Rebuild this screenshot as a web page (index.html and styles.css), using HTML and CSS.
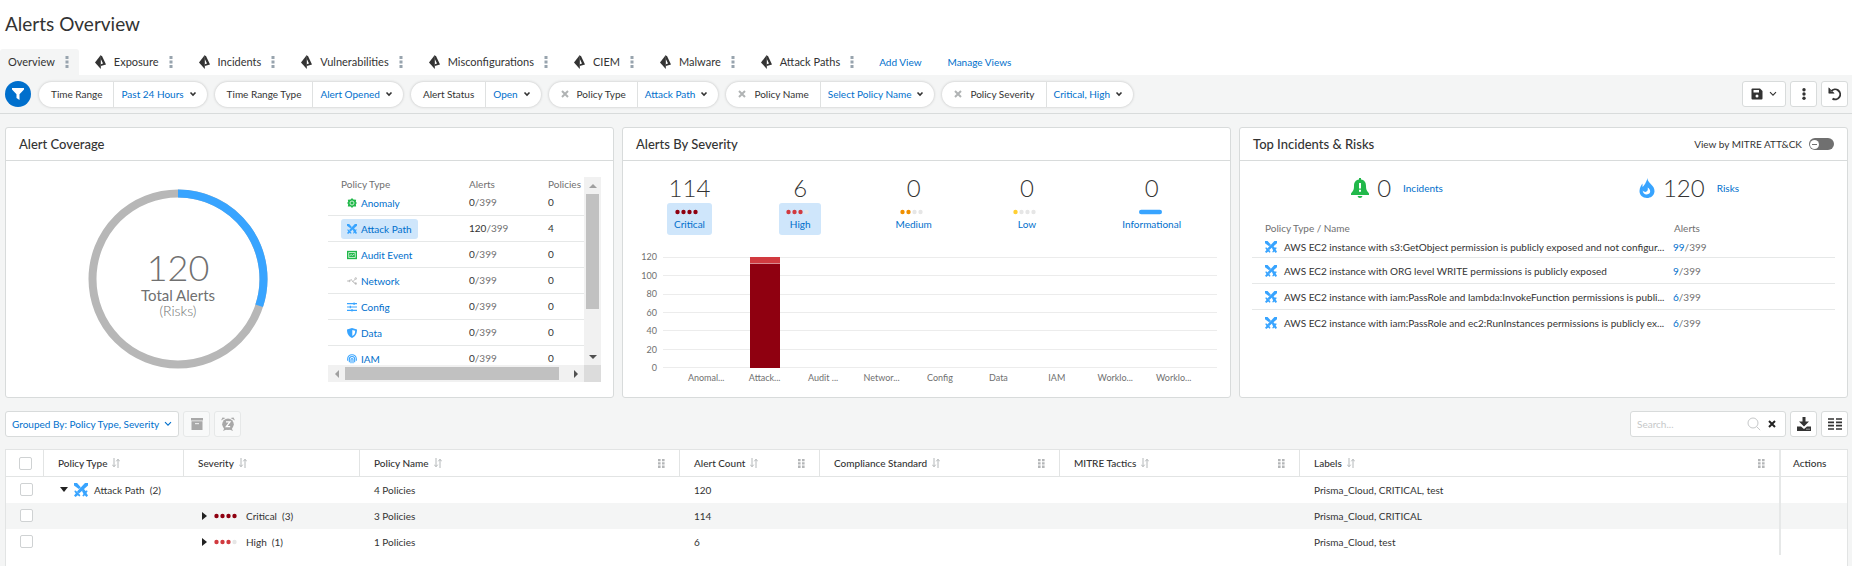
FILE: index.html
```html
<!DOCTYPE html>
<html lang="en">
<head>
<meta charset="utf-8">
<title>Alerts Overview</title>
<link rel="stylesheet" href="styles.css">
</head>
<body>
<svg class="defs" width="0" height="0" aria-hidden="true">
  <symbol id="prism" viewBox="0 0 11 14"><path d="M5.800 0 0 7.500 5.800 14z" fill="#333"/><path d="M5.500.500 7 1l4 8.500-5.200 1.500V9.300l2.200-.8L5.800 4z" fill="#333"/></symbol>
  <symbol id="kebab" viewBox="0 0 4 12"><path d="M.5 0h3v3h-3zM.5 4.500h3v3h-3zM.5 9h3v3h-3z" fill="currentColor"/></symbol>
  <symbol id="dots3" viewBox="0 0 4 12"><g fill="currentColor"><circle cx="2" cy="1.700" r="1.700"/><circle cx="2" cy="6" r="1.700"/><circle cx="2" cy="10.300" r="1.700"/></g></symbol>
  <symbol id="chev" viewBox="0 0 8 6"><path d="M1.500 1.500 4 4l2.500-2.500" fill="none" stroke="currentColor" stroke-width="1.600"/></symbol>
  <symbol id="thinchev" viewBox="0 0 8 6"><path d="M1 1.200 4 4.200l3-3" fill="none" stroke="currentColor" stroke-width="1.100"/></symbol>
  <symbol id="cross" viewBox="0 0 8 8"><path d="M1 1l6 6M7 1 1 7" stroke="currentColor" stroke-width="2"/></symbol>
  <symbol id="swords" viewBox="0 0 14 14"><path d="M0 0h3l3.800 4.200L4.800 6 0 2.500zM14 0h-3L3 8.500 5 10.500l9-8zM8 8l2-2 1.500 2 1.500-.8.6 1.200-1.200 1.500L14 12.500 12.500 14l-1.700-1.800L9.500 13.400 8.300 12.800 9.500 11zM1 7.200l1.200.8L6 11.800l.3 1-1 .8-1.500-1.400L1.500 14 0 12.500l1.800-1.900L.4 8.400z" fill="#38a4ff"/></symbol>
  <symbol id="gear" viewBox="0 0 12 12"><path d="M6 0 7.600 1.800 11 2 10.600 4.600 11.800 6l-1.200 1.600.4 2.500-3.400.2L6 12 4.400 10.300l-3.400-.2.400-2.500L.2 6l1.200-1.400L1 2l3.400-.2z" fill="#21b84a"/><circle cx="6" cy="6" r="2.400" fill="none" stroke="#c9f0d3" stroke-width="1.200"/></symbol>
  <symbol id="audit" viewBox="0 0 12 12"><path d="M0 1h12v10H0z" fill="#21b84a"/><path d="M2 3h8v6H2z" fill="none" stroke="#d5f3dc"/><path d="M3 7l2-1.500 1.500 1L9 4.800" fill="none" stroke="#e4f8e9"/></symbol>
  <symbol id="network" viewBox="0 0 12 10"><g fill="none" stroke="#b5b5b5"><path d="M0 5h3l2-2 2 3 3-3.500M7 6l4 2.500"/><circle cx="10.500" cy="2" r="1"/><circle cx="10.500" cy="8" r="1"/><circle cx="3" cy="5" r=".8"/></g></symbol>
  <symbol id="sliders" viewBox="0 0 12 12"><path d="M0 2h12M0 6h12M0 10h12M8.500.5v3M4 4.500v3M6 8.500v3" stroke="#38a4ff" stroke-width="1.400"/></symbol>
  <symbol id="shield" viewBox="0 0 12 12"><path d="M6 0 12 1.800c0 5-1.500 8-6 10.200C1.500 9.800 0 6.800 0 1.800z" fill="#38a4ff"/><path d="M6.400 2.300 9.800 3.200C9.800 6.300 9 8 6.400 9.700z" fill="#fff"/></symbol>
  <symbol id="finger" viewBox="0 0 12 12"><g fill="none" stroke="#38a4ff" stroke-width="1.300"><path d="M.8 8V6a5.200 5.200 0 0 1 10.400 0v2M2.800 10V6.200a3.200 3.200 0 0 1 6.400 0V10M4.800 11V6.500a1.200 1.200 0 0 1 2.400 0V11"/></g></symbol>
  <symbol id="sort" viewBox="0 0 8 10"><path d="M2 0v8.500M.3 6.700 2 8.800l1.700-2.100M6 10V1.500M4.300 3.300 6 1.200l1.700 2.100" fill="none" stroke="#b4b8ba"/></symbol>
  <symbol id="grip" viewBox="0 0 7 9"><path d="M0 0h2.600v2.300H0zM4 0h2.600v2.300H4zM0 3.300h2.600v2.300H0zM4 3.300h2.600v2.300H4zM0 6.600h2.600v2.300H0zM4 6.600h2.600v2.300H4z" fill="#b4b6b8"/></symbol>
  <symbol id="sev4" viewBox="0 0 28 6"><g fill="#8f0010"><circle cx="2.500" cy="3" r="2.200"/><circle cx="8.500" cy="3" r="2.200"/><circle cx="14.500" cy="3" r="2.200"/><circle cx="20.500" cy="3" r="2.200"/></g></symbol>
  <symbol id="sev3" viewBox="0 0 28 6"><g fill="#d13a3f"><circle cx="2.500" cy="3" r="2.200"/><circle cx="8.500" cy="3" r="2.200"/><circle cx="14.500" cy="3" r="2.200"/></g><circle cx="20.500" cy="3" r="2.200" fill="#e6e6e6"/></symbol>
  <symbol id="sev2" viewBox="0 0 28 6"><g fill="#f09000"><circle cx="2.500" cy="3" r="2.200"/><circle cx="8.500" cy="3" r="2.200"/></g><g fill="#e6e6e6"><circle cx="14.500" cy="3" r="2.200"/><circle cx="20.500" cy="3" r="2.200"/></g></symbol>
  <symbol id="sev1" viewBox="0 0 28 6"><circle cx="2.500" cy="3" r="2.200" fill="#ffcf33"/><g fill="#e6e6e6"><circle cx="8.500" cy="3" r="2.200"/><circle cx="14.500" cy="3" r="2.200"/><circle cx="20.500" cy="3" r="2.200"/></g></symbol>
  <symbol id="sev0" viewBox="0 0 28 6"><rect x="1" y=".8" width="23" height="4.400" rx="2.200" fill="#38a4ff"/></symbol>
</svg>

<header class="title-bar"><h1>Alerts Overview</h1></header>

<nav class="tabs" aria-label="Views">
  <div class="tab active"><a href="#">Overview</a><button class="plain" aria-label="Overview menu"><svg class="kebab"><use href="#kebab"/></svg></button></div>
  <div class="tab"><svg class="prism"><use href="#prism"/></svg><a href="#">Exposure</a><button class="plain" aria-label="Exposure menu"><svg class="kebab"><use href="#kebab"/></svg></button></div>
  <div class="tab"><svg class="prism"><use href="#prism"/></svg><a href="#">Incidents</a><button class="plain" aria-label="Incidents menu"><svg class="kebab"><use href="#kebab"/></svg></button></div>
  <div class="tab"><svg class="prism"><use href="#prism"/></svg><a href="#">Vulnerabilities</a><button class="plain" aria-label="Vulnerabilities menu"><svg class="kebab"><use href="#kebab"/></svg></button></div>
  <div class="tab"><svg class="prism"><use href="#prism"/></svg><a href="#">Misconfigurations</a><button class="plain" aria-label="Misconfigurations menu"><svg class="kebab"><use href="#kebab"/></svg></button></div>
  <div class="tab"><svg class="prism"><use href="#prism"/></svg><a href="#">CIEM</a><button class="plain" aria-label="CIEM menu"><svg class="kebab"><use href="#kebab"/></svg></button></div>
  <div class="tab"><svg class="prism"><use href="#prism"/></svg><a href="#">Malware</a><button class="plain" aria-label="Malware menu"><svg class="kebab"><use href="#kebab"/></svg></button></div>
  <div class="tab"><svg class="prism"><use href="#prism"/></svg><a href="#">Attack Paths</a><button class="plain" aria-label="Attack Paths menu"><svg class="kebab"><use href="#kebab"/></svg></button></div>
  <div class="view-links"><a href="#">Add View</a><a href="#">Manage Views</a></div>
</nav>

<section class="filters" aria-label="Filters">
  <button class="filter-toggle" aria-label="Filters"><svg width="14" height="14" viewBox="0 0 14 14"><path d="M1 1h12v1.500L8.500 7.300V13l-3-2V7.300L1 2.500z" fill="#fff"/></svg></button>
  <div class="pill"><span class="pill-name">Time Range</span><button class="pill-value">Past 24 Hours<svg class="chev"><use href="#chev"/></svg></button></div>
  <div class="pill"><span class="pill-name">Time Range Type</span><button class="pill-value">Alert Opened<svg class="chev"><use href="#chev"/></svg></button></div>
  <div class="pill"><span class="pill-name">Alert Status</span><button class="pill-value">Open<svg class="chev"><use href="#chev"/></svg></button></div>
  <div class="pill"><span class="pill-name"><button class="plain remove" aria-label="Remove"><svg class="cross"><use href="#cross"/></svg></button>Policy Type</span><button class="pill-value">Attack Path<svg class="chev"><use href="#chev"/></svg></button></div>
  <div class="pill"><span class="pill-name"><button class="plain remove" aria-label="Remove"><svg class="cross"><use href="#cross"/></svg></button>Policy Name</span><button class="pill-value">Select Policy Name<svg class="chev"><use href="#chev"/></svg></button></div>
  <div class="pill"><span class="pill-name"><button class="plain remove" aria-label="Remove"><svg class="cross"><use href="#cross"/></svg></button>Policy Severity</span><button class="pill-value">Critical, High<svg class="chev"><use href="#chev"/></svg></button></div>
  <div class="actions">
    <button class="btn wide" aria-label="Save"><svg width="12" height="12" viewBox="0 0 12 12"><path d="M1.500.5H9L11.500 3v7.500q0 1-1 1h-9q-1 0-1-1v-9q0-1 1-1z" fill="#333"/><path d="M2.500 2h5.500v2.500H2.500z" fill="#fff"/><circle cx="6" cy="8" r="1.500" fill="#fff"/></svg><svg class="chev"><use href="#thinchev"/></svg></button>
    <button class="btn" aria-label="More"><svg class="kebab"><use href="#dots3"/></svg></button>
    <button class="btn" aria-label="Reset"><svg width="14" height="14" viewBox="0 0 14 14"><path d="M3.300 4.200A5 5 0 1 1 4.500 11.600" fill="none" stroke="#333" stroke-width="1.900"/><path d="M.8.800v5.400h5.400L4.600 4.800H2.500V2.500z" fill="#333" stroke="#333" stroke-width=".6"/></svg></button>
  </div>
</section>

<main>
  <div class="cards">
    <section class="card">
      <header><h2>Alert Coverage</h2></header>
      <div class="coverage">
        <div class="donut">
          <svg viewBox="0 0 180 180"><circle cx="90" cy="90" r="85.500" fill="none" stroke="#b7b7b7" stroke-width="8"/><path d="M90 4.500A85.500 85.500 0 0 1 171.200 116.800" fill="none" stroke="#38a4ff" stroke-width="8"/></svg>
          <div class="donut-text"><span class="total">120</span><span class="total-label">Total Alerts</span><span class="total-sub">(Risks)</span></div>
        </div>
        <div class="scroller">
          <div class="scroll-view">
            <table class="types">
              <colgroup><col class="c-type"><col class="c-alerts"><col></colgroup>
              <thead><tr><th>Policy Type</th><th>Alerts</th><th>Policies</th></tr></thead>
              <tbody>
                <tr><td><a href="#" class="type"><svg class="ti"><use href="#gear"/></svg>Anomaly</a></td><td><b>0</b>/399</td><td><b>0</b></td></tr>
                <tr><td><a href="#" class="type on"><svg class="ti"><use href="#swords"/></svg>Attack Path</a></td><td><b>120</b>/399</td><td><b>4</b></td></tr>
                <tr><td><a href="#" class="type"><svg class="ti"><use href="#audit"/></svg>Audit Event</a></td><td><b>0</b>/399</td><td><b>0</b></td></tr>
                <tr><td><a href="#" class="type"><svg class="ti"><use href="#network"/></svg>Network</a></td><td><b>0</b>/399</td><td><b>0</b></td></tr>
                <tr><td><a href="#" class="type"><svg class="ti"><use href="#sliders"/></svg>Config</a></td><td><b>0</b>/399</td><td><b>0</b></td></tr>
                <tr><td><a href="#" class="type"><svg class="ti"><use href="#shield"/></svg>Data</a></td><td><b>0</b>/399</td><td><b>0</b></td></tr>
                <tr><td><a href="#" class="type"><svg class="ti"><use href="#finger"/></svg>IAM</a></td><td><b>0</b>/399</td><td><b>0</b></td></tr>
              </tbody>
            </table>
          </div>
          <div class="vbar" aria-hidden="true"><i class="arrow up off"></i><span class="thumb"></span><i class="arrow down"></i></div>
          <div class="hbar" aria-hidden="true"><i class="arrow left off"></i><span class="thumb"></span><i class="arrow right"></i></div>
          <div class="corner"></div>
        </div>
      </div>
    </section>

    <section class="card">
      <header><h2>Alerts By Severity</h2></header>
      <div class="severities">
        <a href="#" class="sev"><span class="num">114</span><span class="chip on"><svg class="sd"><use href="#sev4"/></svg>Critical</span></a>
        <a href="#" class="sev"><span class="num">6</span><span class="chip on"><svg class="sd"><use href="#sev3"/></svg>High</span></a>
        <a href="#" class="sev"><span class="num">0</span><span class="chip"><svg class="sd"><use href="#sev2"/></svg>Medium</span></a>
        <a href="#" class="sev"><span class="num">0</span><span class="chip"><svg class="sd"><use href="#sev1"/></svg>Low</span></a>
        <a href="#" class="sev"><span class="num">0</span><span class="chip"><svg class="sd"><use href="#sev0"/></svg>Informational</span></a>
      </div>
      <div class="chart">
        <div class="yaxis"><span>120</span><span>100</span><span>80</span><span>60</span><span>40</span><span>20</span><span>0</span></div>
        <div class="plot">
          <div class="lines"><i></i><i></i><i></i><i></i><i></i><i></i></div>
          <div class="bars"><span></span><span><i class="bar"><i class="high" style="height:5%"></i><i class="crit" style="height:95%"></i></i></span><span></span><span></span><span></span><span></span><span></span><span></span><span></span></div>
        </div>
        <div class="xaxis"><span>Anomal...</span><span>Attack...</span><span>Audit ...</span><span>Networ...</span><span>Config</span><span>Data</span><span>IAM</span><span>Worklo...</span><span>Worklo...</span></div>
      </div>
    </section>

    <section class="card">
      <header><h2>Top Incidents &amp; Risks</h2><label class="switch">View by MITRE ATT&amp;CK<input type="checkbox" role="switch"></label></header>
      <div class="summary">
        <a href="#" class="stat"><svg width="18" height="20" viewBox="0 0 18 20"><path d="M8 0h2v1.500C13.500 2 15 4.500 15 8c0 4 1 5 3 7.500V17H0v-1.500C2 13 3 12 3 8c0-3.500 1.500-6 5-6.500zM6.500 18h5q-.5 2-2.500 2t-2.500-2z" fill="#21b84a"/><path d="M8 5h2v5.500H8zM8 11.800h2v2H8z" fill="#fff"/></svg><span class="num">0</span><span>Incidents</span></a>
        <a href="#" class="stat"><svg width="16" height="20" viewBox="0 0 16 20"><path d="M8.500 0C8 5 16 7 15.500 13.500 15 18 11.500 20 8 20 3.500 20 .5 17 .5 13 .5 9.500 2.500 7 3.500 5.500V9C5 8 7.500 4 8.500 0z" fill="#38a4ff"/><path d="M8.700 9.500c3 1.500 4 6.500-1 7-2.500 0-4-1.800-4-4 2.500 3 6 1 5-3z" fill="#fff"/></svg><span class="num">120</span><span>Risks</span></a>
      </div>
      <table class="top">
        <colgroup><col><col class="c-count"></colgroup>
        <thead><tr><th>Policy Type / Name</th><th>Alerts</th></tr></thead>
        <tbody>
          <tr><td><div class="cell"><svg class="ti"><use href="#swords"/></svg><span>AWS EC2 instance with s3:GetObject permission is publicly exposed and not configur...</span></div></td><td><a href="#">99</a>/399</td></tr>
          <tr><td><div class="cell"><svg class="ti"><use href="#swords"/></svg><span>AWS EC2 instance with ORG level WRITE permissions is publicly exposed</span></div></td><td><a href="#">9</a>/399</td></tr>
          <tr><td><div class="cell"><svg class="ti"><use href="#swords"/></svg><span>AWS EC2 instance with iam:PassRole and lambda:InvokeFunction permissions is publi...</span></div></td><td><a href="#">6</a>/399</td></tr>
          <tr><td><div class="cell"><svg class="ti"><use href="#swords"/></svg><span>AWS EC2 instance with iam:PassRole and ec2:RunInstances permissions is publicly ex...</span></div></td><td><a href="#">6</a>/399</td></tr>
        </tbody>
      </table>
    </section>
  </div>

  <div class="toolbar">
    <button class="btn group">Grouped By: Policy Type, Severity<svg class="chev"><use href="#thinchev"/></svg></button>
    <button class="btn disabled" disabled aria-label="Dismiss"><svg width="12" height="12" viewBox="0 0 12 12"><path d="M0 0h12v2.500H0zM.5 3.300h11V12H.5z" fill="#a8a8a8"/><path d="M4 5h4v1.200H4z" fill="#e8e8e8"/></svg></button>
    <button class="btn disabled" disabled aria-label="Snooze"><svg width="14" height="14" viewBox="0 0 14 14"><path d="M0 3.500 1.500.5 4.500 1zM14 3.500 12.500.5 9.500 1z" fill="#a8a8a8"/><circle cx="7" cy="7.300" r="5.800" fill="#a8a8a8"/><path d="M2 14l1.500-3 2 1.500zM12 14l-1.500-3-2 1.500z" fill="#a8a8a8"/><path d="M5 4.800h4L5.300 9.700H9.200" fill="none" stroke="#fff" stroke-width="1.300"/></svg></button>
    <div class="tools">
      <div class="search"><input type="text" placeholder="Search..." aria-label="Search"><svg width="14" height="14" viewBox="0 0 14 14"><circle cx="6" cy="6" r="5" fill="none" stroke="#c6c8c9"/><path d="M9.600 9.600l3.600 3.600" stroke="#c6c8c9"/></svg><button class="plain clear" aria-label="Clear"><svg class="cross"><use href="#cross"/></svg></button></div>
      <button class="btn" aria-label="Download"><svg width="14" height="14" viewBox="0 0 14 14"><path d="M5.500 0h3v4.500H12L7 9.500 2 4.500h3.500z" fill="#333"/><path d="M0 9.500h4l3 2.500 3-2.500h4V14H0z" fill="#333"/><path d="M9.500 12.200h1M11.500 12.200h1" stroke="#fff"/></svg></button>
      <button class="btn" aria-label="Columns"><svg width="14" height="12" viewBox="0 0 14 12"><path d="M0 1h6M8 1h6M0 4.300h6M8 4.300h6M0 7.600h6M8 7.600h6M0 11h6M8 11h6" stroke="#333" stroke-width="1.700"/></svg></button>
    </div>
  </div>

  <div class="grid-wrap">
    <table class="grid">
      <colgroup><col class="g-check"><col class="g-140"><col class="g-176"><col class="g-320"><col class="g-140"><col class="g-240"><col class="g-240"><col><col class="g-68"></colgroup>
      <thead><tr>
        <th><input type="checkbox" aria-label="Select all"></th>
        <th><div class="head">Policy Type<svg class="sort"><use href="#sort"/></svg></div></th>
        <th><div class="head">Severity<svg class="sort"><use href="#sort"/></svg></div></th>
        <th><div class="head">Policy Name<svg class="sort"><use href="#sort"/></svg><svg class="grip"><use href="#grip"/></svg></div></th>
        <th><div class="head">Alert Count<svg class="sort"><use href="#sort"/></svg><svg class="grip"><use href="#grip"/></svg></div></th>
        <th><div class="head">Compliance Standard<svg class="sort"><use href="#sort"/></svg><svg class="grip"><use href="#grip"/></svg></div></th>
        <th><div class="head">MITRE Tactics<svg class="sort"><use href="#sort"/></svg><svg class="grip"><use href="#grip"/></svg></div></th>
        <th><div class="head">Labels<svg class="sort"><use href="#sort"/></svg><svg class="grip"><use href="#grip"/></svg></div></th>
        <th class="pinned"><div class="head">Actions</div></th>
      </tr></thead>
      <tbody>
        <tr><td><input type="checkbox" aria-label="Select Attack Path"></td><td><div class="cell"><button class="plain tri open" aria-label="Collapse"></button><svg class="big"><use href="#swords"/></svg>Attack Path&nbsp; (2)</div></td><td></td><td>4 Policies</td><td>120</td><td></td><td></td><td>Prisma_Cloud, CRITICAL, test</td><td class="pinned"></td></tr>
        <tr><td><input type="checkbox" aria-label="Select Critical"></td><td></td><td><div class="cell"><button class="plain tri" aria-label="Expand"></button><svg class="sd"><use href="#sev4"/></svg>Critical&nbsp; (3)</div></td><td>3 Policies</td><td>114</td><td></td><td></td><td>Prisma_Cloud, CRITICAL</td><td class="pinned"></td></tr>
        <tr><td><input type="checkbox" aria-label="Select High"></td><td></td><td><div class="cell"><button class="plain tri" aria-label="Expand"></button><svg class="sd"><use href="#sev3"/></svg>High&nbsp; (1)</div></td><td>1 Policies</td><td>6</td><td></td><td></td><td>Prisma_Cloud, test</td><td class="pinned"></td></tr>
      </tbody>
    </table>
  </div>
</main>
</body>
</html>
```
FILE: styles.css
```css
* { box-sizing: border-box; }
html, body { height: 100%; }
body {
  margin: 0;
  display: flex;
  flex-direction: column;
  min-width: 1280px;
  overflow: hidden;
  background: #f4f5f5;
  color: #333;
  font: 10px/16px Lato, "Open Sans", sans-serif;
}
a { color: #006fcc; text-decoration: none; }
button, input { font: inherit; color: inherit; margin: 0; }
svg { display: block; flex: none; }
.defs { position: absolute; }
.plain { border: 0; background: none; padding: 0; display: flex; }
h1, h2 { margin: 0; font-weight: 400; }

.title-bar { background: #fff; padding: 12px 5px 13px; }
h1 { font-size: 19px; line-height: 24px; }

.tabs { display: flex; background: #fff; font-size: 11px; }
.tab { display: flex; align-items: center; height: 26px; padding: 0 10px 0 16px; }
.tab a { color: #333; }
.tab.active { background: #f4f5f5; border-radius: 3px 3px 0 0; padding-left: 8px; }
.prism { width: 11px; height: 14px; margin-right: 8px; }
.kebab { width: 4px; height: 12px; }
.tab .kebab { color: #98a4ae; margin-left: 10px; }
.view-links { display: flex; align-items: center; gap: 26px; padding-left: 15px; font-size: 10px; }

.filters { display: flex; align-items: center; gap: 8px; padding: 6px 4px 6px 5px; border-bottom: 1px solid #d8dbdb; }
.filter-toggle { display: flex; align-items: center; justify-content: center; width: 26px; height: 26px; border: 0; border-radius: 50%; background: #006fcc; padding: 0; }
.pill { display: flex; height: 25px; background: #fff; border-radius: 13px; box-shadow: 0 0 3px rgba(0, 0, 0, .22); }
.pill-name { display: flex; align-items: center; padding: 0 11px 0 12px; border-right: 1px solid #dfe1e1; }
.remove { margin-right: 8px; color: #b0b3b4; }
.cross { width: 8px; height: 8px; }
.pill-value { display: flex; align-items: center; gap: 5px; border: 0; background: none; color: #006fcc; padding: 0 10px 0 7px; }
.chev { width: 8px; height: 6px; }
.pill .chev, .wide .chev { color: #333; }
.actions { display: flex; gap: 4px; margin-left: auto; }
.btn { display: flex; align-items: center; justify-content: center; width: 27px; height: 26px; padding: 0; border: 1px solid #d8dbdb; border-radius: 3px; background: #fff; }
.wide { width: 44px; gap: 6px; }

main { flex: 1; min-height: 0; display: flex; flex-direction: column; padding: 13px 4px 0 5px; }
.cards { display: grid; grid-template-columns: repeat(3, minmax(0, 1fr)); gap: 8px; }
.card { background: #fff; border: 1px solid #d8dbdb; border-radius: 3px; min-height: 271px; }
.card > header { display: flex; align-items: center; justify-content: space-between; height: 33px; padding: 0 13px; border-bottom: 1px solid #d8dbdb; }
h2 { font-size: 13px; font-weight: 500; }

.coverage { display: flex; justify-content: space-between; padding: 16px 12px 14px 82px; }
.donut { display: grid; width: 180px; height: 180px; margin-top: 12px; }
.donut > * { grid-area: 1 / 1; }
.donut-text { display: flex; flex-direction: column; align-items: center; justify-content: center; padding-top: 8px; color: #707070; }
.total { font-size: 36px; line-height: 40px; font-weight: 300; }
.total-label { font-size: 15px; }
.total-sub { font-size: 14px; font-weight: 300; }
.scroller { display: grid; grid-template-columns: 256px 17px; grid-template-rows: 188px 17px; }
.scroll-view { overflow: hidden; }
table { border-collapse: separate; border-spacing: 0; table-layout: fixed; width: 100%; text-align: left; }
th { font-weight: 400; }
th, td { padding: 0; }
.c-type { width: 141px; }
.c-alerts { width: 79px; }
.types { color: #707070; }
.types th { height: 13px; line-height: 12px; }
.types td { height: 26px; line-height: 25px; border-bottom: 1px solid #e6e8e8; }
.types th:first-child, .types td:first-child { padding-left: 13px; }
.types b { font-weight: 400; color: #333; }
.type { display: inline-flex; align-items: center; gap: 4px; height: 20px; padding: 0 6px; border-radius: 3px; line-height: 20px; vertical-align: middle; }
.on { background: #cfe6fb; }
.ti { width: 10px; height: 10px; }
.vbar, .hbar { display: flex; background: #f1f1f1; }
.vbar { flex-direction: column; align-items: center; }
.hbar { align-items: center; }
.thumb { background: #c1c1c1; }
.vbar .thumb { width: 13px; height: 115px; margin-bottom: auto; }
.hbar .thumb { height: 13px; width: 214px; margin-right: auto; }
.arrow { display: flex; align-items: center; justify-content: center; width: 17px; height: 17px; }
.arrow::before { content: ""; border: 4px solid transparent; }
.up::before { border-top: 0; border-bottom-color: #505050; }
.down::before { border-bottom: 0; border-top-color: #505050; }
.left::before { border-left: 0; border-right-color: #505050; }
.right::before { border-right: 0; border-left-color: #505050; }
.off { opacity: .5; }
.corner { background: #dcdcdc; }

.severities { display: flex; justify-content: space-between; padding: 15px 42px 0 44px; }
.sev { display: flex; flex-direction: column; align-items: center; }
.num { font-size: 24px; line-height: 24px; font-weight: 300; color: #333; }
.chip { display: flex; flex-direction: column; align-items: center; gap: 2px; margin-top: 3px; padding: 6px 7px 4px; border-radius: 3px; line-height: 14px; }
.sd { width: 28px; height: 6px; }
.chart { display: grid; grid-template-columns: 34px 1fr; column-gap: 6px; padding: 22px 13px 0 0; font-size: 9px; line-height: 12px; color: #707070; }
.yaxis { display: flex; flex-direction: column; justify-content: space-between; height: 123px; margin: -6px 0; text-align: right; }
.plot { display: grid; height: 111px; }
.plot > * { grid-area: 1 / 1; }
.lines { display: flex; flex-direction: column; border-bottom: 1px solid #ececec; }
.lines i { flex: 1; border-top: 1px solid #ececec; }
.bars { display: flex; padding: 0 14px; }
.bars span { flex: 1; display: flex; justify-content: center; }
.bar { width: 30px; height: 100%; }
.bar i { display: block; }
.high { background: #d13a3f; }
.crit { background: #8f0010; border-top: 1px solid #d98a90; }
.xaxis { grid-column: 2; display: flex; padding: 4px 14px 0; }
.xaxis span { flex: 1; text-align: center; }

.switch { display: flex; align-items: center; gap: 7px; }
.switch input { appearance: none; display: flex; align-items: center; width: 25px; height: 12px; padding: 0 1px; border-radius: 6px; background: #707070; }
.switch input::before { content: ""; width: 9px; height: 9px; border-radius: 50%; background: linear-gradient(#707070, #707070) center / 5px 1px no-repeat #fff; }
.summary { display: grid; grid-template-columns: 1fr 1fr; padding: 15px 12px 0 11px; }
.stat { display: flex; align-items: center; justify-content: center; gap: 8px; }
.stat .num + span { margin-left: 4px; }
.top { width: calc(100% - 24px); margin: 19px 12px 0; color: #707070; }
.c-count { width: 162px; }
.top th { height: 18px; padding-left: 1px; }
.top td { height: 26px; border-bottom: 1px solid #e6e8e8; line-height: 24px; }
.top tr:last-child td { border-bottom: 0; }
.top tbody tr:first-child td { height: 21px; line-height: 19px; }
.top th:first-child, .top td:first-child { padding-left: 13px; }
.cell { display: flex; align-items: center; white-space: nowrap; color: #333; }
.top .cell { gap: 7px; }
.top .ti { width: 12px; height: 12px; }

.toolbar { display: flex; align-items: center; gap: 4px; padding: 13px 0 12px; }
.group { width: auto; gap: 5px; padding: 0 6px; color: #006fcc; }
.disabled { background: #f8f9f9; border-color: #e6e8e8; }
.tools { display: flex; gap: 4px; margin-left: auto; }
.search { display: flex; align-items: center; width: 156px; height: 26px; padding: 0 9px 0 6px; border: 1px solid #d8dbdb; border-radius: 3px; background: #fff; }
.search input { flex: 1; min-width: 0; border: 0; padding: 0; outline: 0; background: none; }
.search input::placeholder { color: #c6c8c9; }
.clear { margin-left: 7px; color: #222; }

.grid-wrap { flex: 1; background: #fff; border: 1px solid #e2e4e4; border-bottom: 0; }
.g-check { width: 37px; }
.g-140 { width: 140px; }
.g-176 { width: 176px; }
.g-320 { width: 320px; }
.g-240 { width: 240px; }
.g-68 { width: 68px; }
.grid th { height: 27px; padding: 0 0 0 14px; border-bottom: 1px solid #e2e4e4; border-left: 1px solid #e2e4e4; font-weight: 500; }
.grid th:first-child { border-left: 0; padding-left: 13px; }
.grid td { height: 26px; padding: 0 0 1px 15px; }
.grid td:first-child { padding-left: 14px; }
.grid tbody tr:nth-child(even) { background: #f4f5f5; }
.grid .pinned { border-left: 2px solid #e6e8e8; padding-left: 12px; }
.head { display: flex; align-items: center; }
.sort { width: 8px; height: 10px; margin-left: 5px; }
.grip { width: 7px; height: 9px; margin: 0 14px 0 auto; }
.grid input { appearance: none; display: block; width: 13px; height: 13px; border: 1px solid #cfd2d3; border-radius: 2px; background: #fff; }
.tri { width: 8px; height: 8px; align-items: center; justify-content: center; margin-right: 6px; margin-left: 2px; }
.tri::before { content: ""; border: 4px solid transparent; border-right: 0; border-left: 5px solid #222; }
.tri.open::before { border: 4px solid transparent; border-bottom: 0; border-top: 5px solid #222; }
.big { width: 14px; height: 14px; margin-right: 6px; }
.grid .sd { margin-right: 4px; }
```
